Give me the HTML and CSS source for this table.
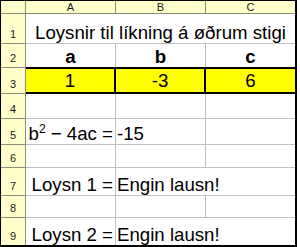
FILE: index.html
```html
<!DOCTYPE html>
<html>
<head>
<meta charset="utf-8">
<link rel="stylesheet" href="styles.css">
</head>
<body>
<div class="sheet">
  <div class="hd corner"></div>
  <div class="hd col">A</div>
  <div class="hd col">B</div>
  <div class="hd col last">C</div>

  <div class="hd rn r1">1</div>
  <div class="c span3 center title r1">Loysnir til líkning á øðrum stigi</div>

  <div class="hd rn r2">2</div>
  <div class="c center bold r2">a</div>
  <div class="c center bold r2">b</div>
  <div class="c center bold r2 last">c</div>

  <div class="hd rn r3">3</div>
  <div class="c center y r3">1</div>
  <div class="c center y r3">-3</div>
  <div class="c center y r3 last">6</div>

  <div class="hd rn r4">4</div>
  <div class="c r4"></div>
  <div class="c r4"></div>
  <div class="c r4 last"></div>

  <div class="hd rn r5">5</div>
  <div class="c right r5"><span>b<sup>2</sup> − 4ac =</span></div>
  <div class="c left r5">-15</div>
  <div class="c r5 last"></div>

  <div class="hd rn r6">6</div>
  <div class="c r6"></div>
  <div class="c r6"></div>
  <div class="c r6 last"></div>

  <div class="hd rn r7">7</div>
  <div class="c right r7">Loysn 1 =</div>
  <div class="c left span2 r7">Engin lausn!</div>

  <div class="hd rn r8">8</div>
  <div class="c r8"></div>
  <div class="c r8"></div>
  <div class="c r8 last"></div>

  <div class="hd rn r9 bottom">9</div>
  <div class="c right r9 bottom">Loysn 2 =</div>
  <div class="c left span2 r9 bottom">Engin lausn!</div>
</div>
</body>
</html>
```
FILE: styles.css
```css
html, body {
  margin: 0;
  padding: 0;
  background: #ffffff;
}

.sheet {
  display: grid;
  grid-template-columns: 25px 90px 90px 89px;
  grid-template-rows: 13px 30px 23px 27px 25px 26px 23px 28px 22px 27px;
  width: 297px;
  box-sizing: border-box;
  border-left: 1px solid #000;
  border-top: 1px solid #000;
  border-right: 2px solid #000;
  border-bottom: 2px solid #000;
  font-family: "Liberation Sans", Arial, sans-serif;
  color: #000;
}

.hd {
  background: #ffffcc;
  border-right: 1px solid #8c8c7a;
  border-bottom: 1px solid #8c8c7a;
  box-sizing: border-box;
  font-size: 11px;
  color: #1a1a1a;
  display: flex;
  justify-content: center;
}

.hd.col {
  align-items: center;
  line-height: 12px;
}

.hd.col.last {
  border-right: none;
}

.hd.rn {
  align-items: flex-end;
  padding-bottom: 3px;
  line-height: 12px;
}

.hd.rn.bottom {
  border-bottom: none;
}

.c {
  box-sizing: border-box;
  border-right: 1px solid #c0c0c0;
  border-bottom: 1px solid #c0c0c0;
  font-size: 18.67px;
  line-height: 21px;
  display: flex;
  align-items: flex-end;
  white-space: nowrap;
  overflow: hidden;
}

.c.last {
  border-right: none;
}

.c.bottom {
  border-bottom: none;
}

.span3 {
  grid-column: span 3;
  border-right: none;
}

.span2 {
  grid-column: span 2;
  border-right: none;
}

.center {
  justify-content: center;
}

.left {
  justify-content: flex-start;
  padding-left: 1px;
}

.right {
  justify-content: flex-end;
  padding-right: 2px;
}

.bold {
  font-weight: bold;
}

.r2 {
  border-bottom: none;
}

.y {
  background: #ffff00;
  border-top: 2px solid #000;
  border-bottom: 2px solid #000;
  border-right: 2px solid #000;
  padding-bottom: 1px;
}

.y.last {
  border-right: none;
}

.r3.hd {
  border-top: 1px solid #8c8c7a;
}

sup {
  font-size: 12px;
  line-height: 0;
  vertical-align: 7px;
}
```
